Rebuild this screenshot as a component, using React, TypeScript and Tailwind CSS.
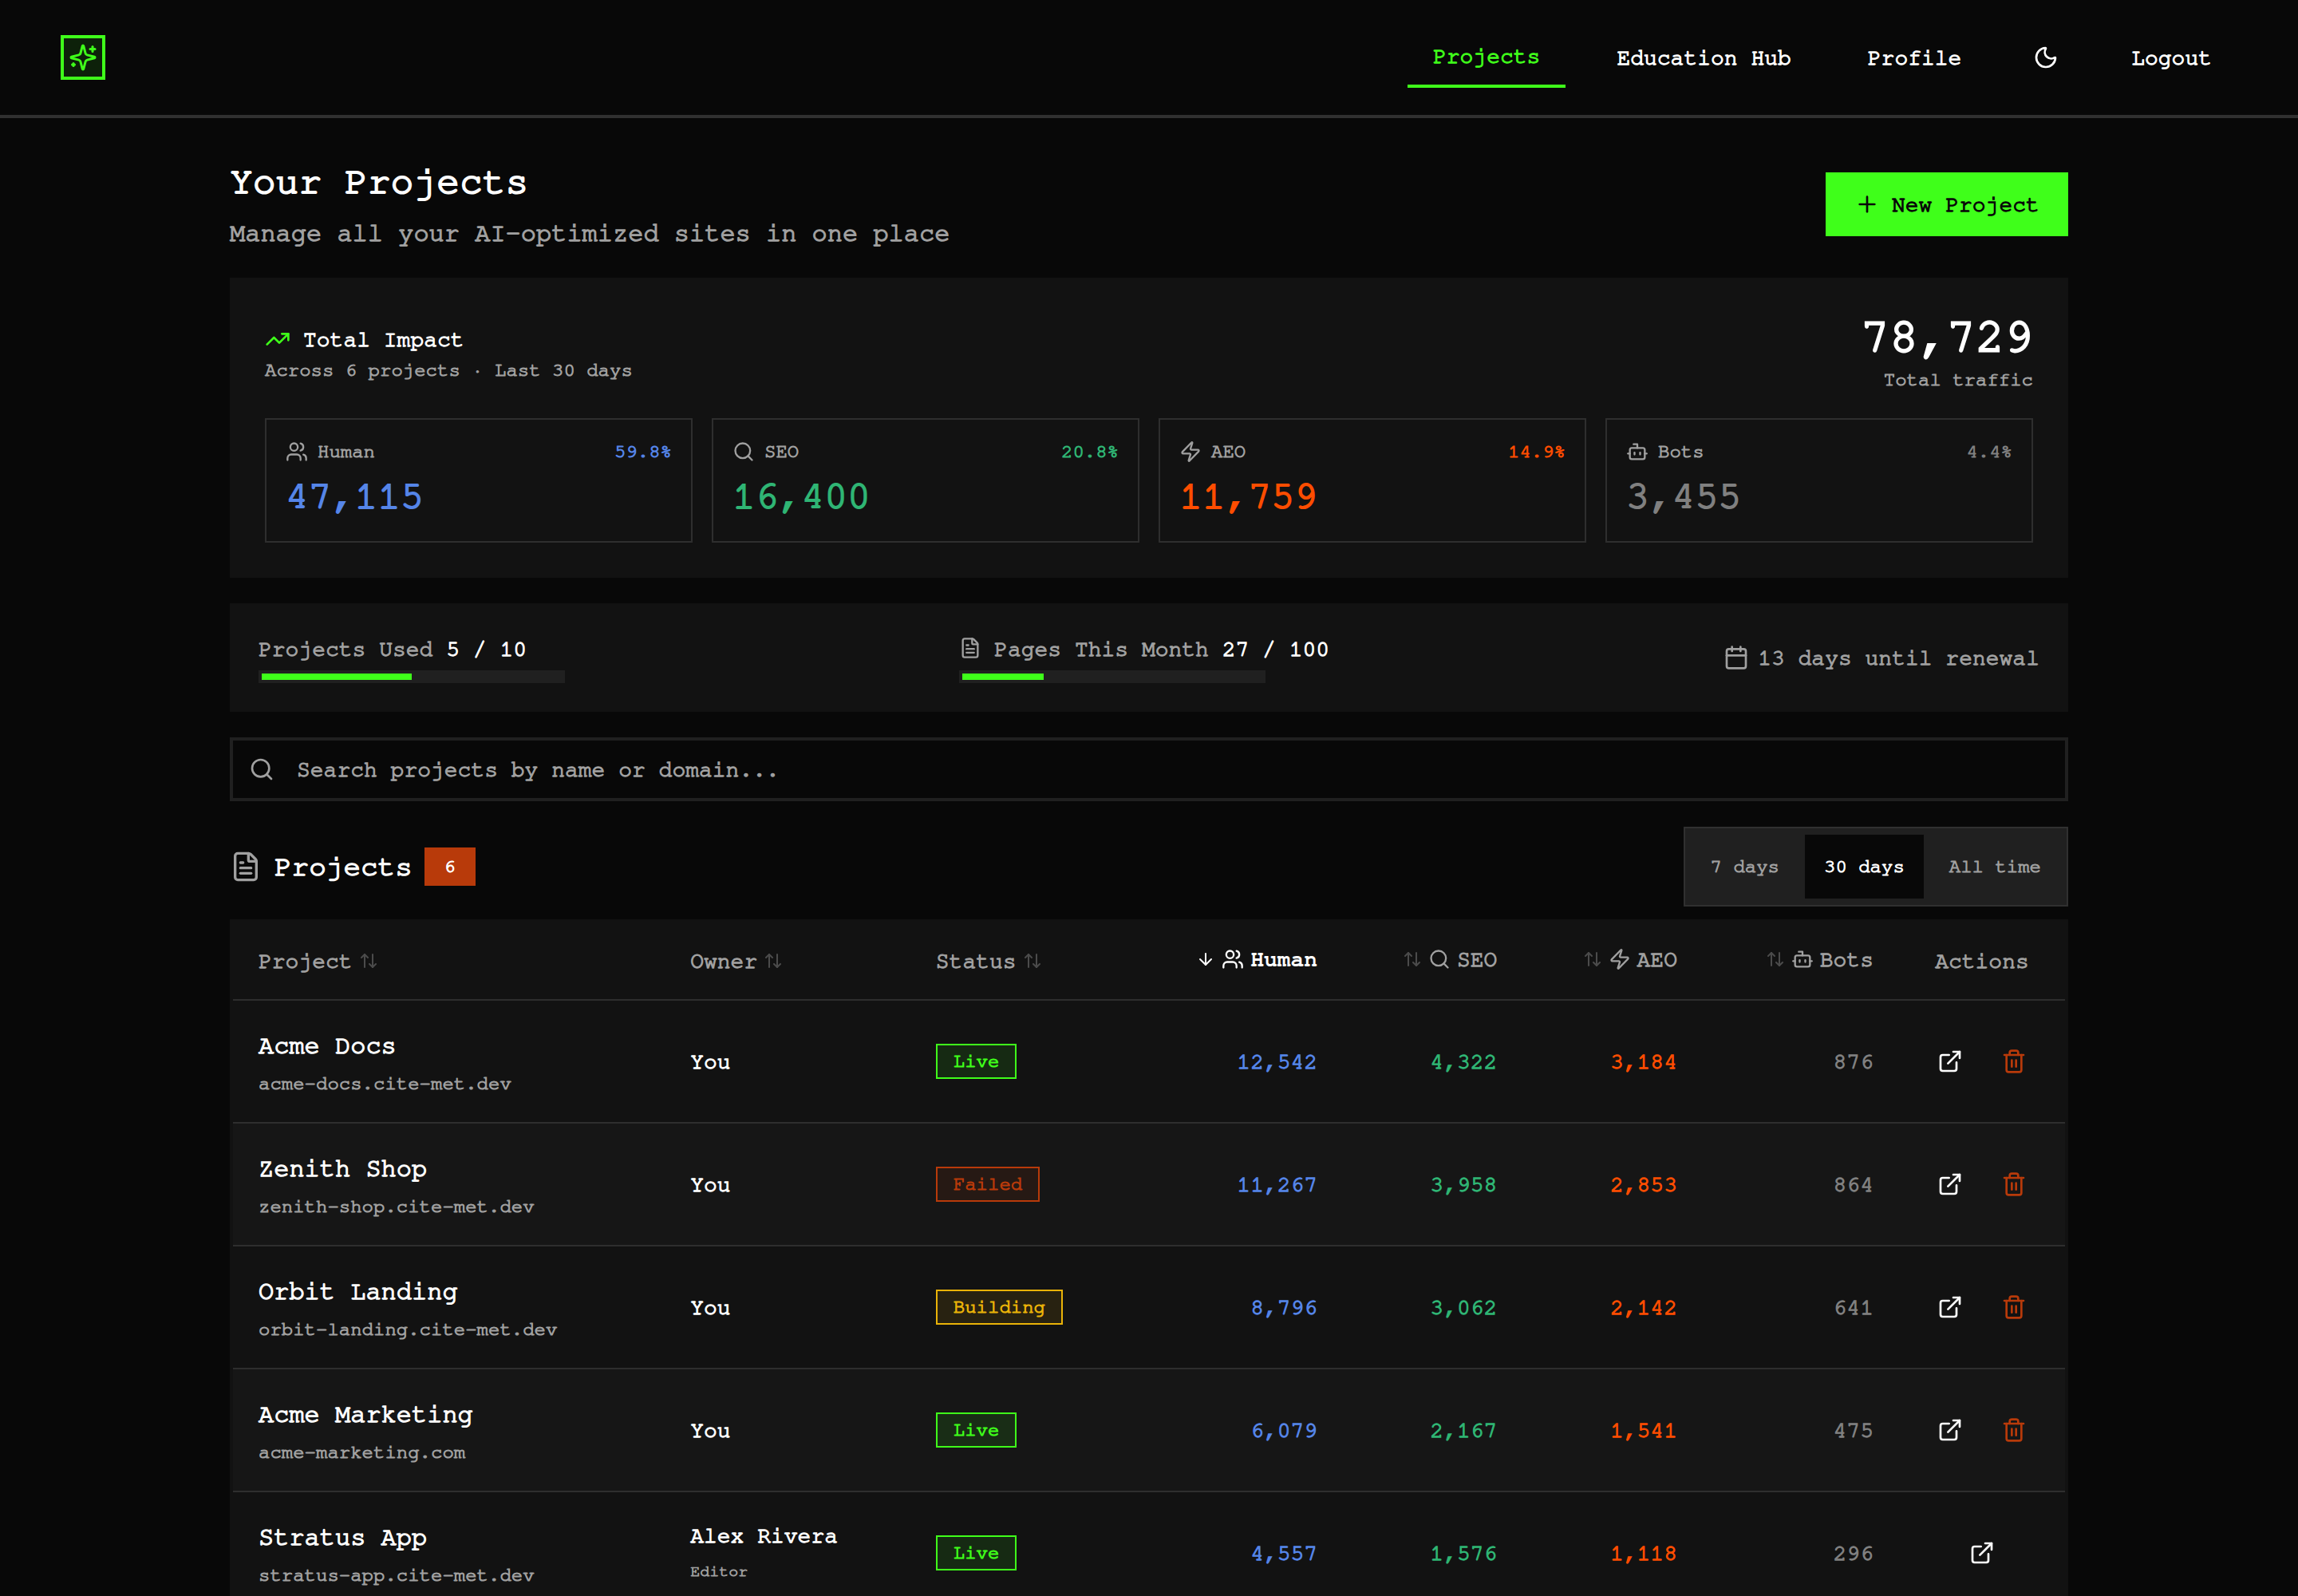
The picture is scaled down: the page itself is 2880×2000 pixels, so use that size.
import clsx from "clsx";
import {
  ArrowDown,
  ArrowUpDown,
  Bot,
  Calendar,
  ExternalLink,
  FileText,
  Moon,
  Plus,
  Search,
  Trash2,
  TrendingUp,
  Users,
  Zap,
} from "lucide-react";

type Status = "Live" | "Failed" | "Building";

interface Project {
  name: string;
  domain: string;
  owner: string;
  role?: string;
  status: Status;
  human: number;
  seo: number;
  aeo: number;
  bots: number;
}

const PROJECTS: Project[] = [
  { name: "Acme Docs", domain: "acme-docs.cite-met.dev", owner: "You", status: "Live", human: 12542, seo: 4322, aeo: 3184, bots: 876 },
  { name: "Zenith Shop", domain: "zenith-shop.cite-met.dev", owner: "You", status: "Failed", human: 11267, seo: 3958, aeo: 2853, bots: 864 },
  { name: "Orbit Landing", domain: "orbit-landing.cite-met.dev", owner: "You", status: "Building", human: 8796, seo: 3062, aeo: 2142, bots: 641 },
  { name: "Acme Marketing", domain: "acme-marketing.com", owner: "You", status: "Live", human: 6079, seo: 2167, aeo: 1541, bots: 475 },
  { name: "Stratus App", domain: "stratus-app.cite-met.dev", owner: "Alex Rivera", role: "Editor", status: "Live", human: 4557, seo: 1576, aeo: 1118, bots: 296 },
];

const STATS = [
  { label: "Human", icon: Users, value: 47115, share: "59.8%", color: "text-[#5585e8]" },
  { label: "SEO", icon: Search, value: 16400, share: "20.8%", color: "text-[#2fb574]" },
  { label: "AEO", icon: Zap, value: 11759, share: "14.9%", color: "text-[#ff4d00]" },
  { label: "Bots", icon: Bot, value: 3455, share: "4.4%", color: "text-[#808080]" },
];

const STATUS_STYLES: Record<Status, string> = {
  Live: "border-[#3fff1a] bg-[#3fff1a]/10 text-[#3fff1a]",
  Failed: "border-[#b83a0a] bg-[#b83a0a]/10 text-[#b83a0a]",
  Building: "border-[#eab308] bg-[#eab308]/10 text-[#eab308]",
};

const TABLE_COLS =
  "grid grid-cols-[541.2px_307.6px_284.6px_257.8px_225.2px_225.6px_246px_208px] items-center";

const fmt = (n: number) => n.toLocaleString("en-US");

function Logo() {
  return (
    <div className="flex size-14 items-center justify-center border-4 border-[#3fff1a] bg-[#3fff1a]/10 text-[#3fff1a]">
      <svg
        className="size-9 shrink-0"
        viewBox="0 0 24 24"
        fill="none"
        stroke="currentColor"
        strokeWidth="2"
        strokeLinecap="round"
        strokeLinejoin="round"
      >
        <path d="M9.937 15.5A2 2 0 0 0 8.5 14.063l-6.135-1.582a.5.5 0 0 1 0-.962L8.5 9.936A2 2 0 0 0 9.937 8.5l1.582-6.135a.5.5 0 0 1 .963 0L14.063 8.5A2 2 0 0 0 15.5 9.937l6.135 1.581a.5.5 0 0 1 0 .964L15.5 14.063a2 2 0 0 0-1.437 1.437l-1.582 6.135a.5.5 0 0 1-.963 0z" />
        <path d="M20 3v4" />
        <path d="M22 5h-4" />
        <path d="M4 17v2" />
        <path d="M5 18H3" />
      </svg>
    </div>
  );
}

function Navbar() {
  return (
    <header className="flex h-[148px] items-center justify-between border-b-4 border-[#303030] px-[76px]">
      <Logo />
      <nav className="flex items-center gap-8 text-[28px] leading-10">
        <a className="border-b-4 border-[#3fff1a] px-8 pt-[17px] pb-[15px] text-[#3fff1a]">Projects</a>
        <a className="px-8 pt-[17px] pb-[15px]">Education Hub</a>
        <a className="px-8 pt-[17px] pb-[15px]">Profile</a>
        <button className="flex w-[84.8px] justify-center pr-px">
          <Moon className="size-8" />
        </button>
        <a className="px-8 pt-[17px] pb-[15px]">Logout</a>
      </nav>
    </header>
  );
}

function TotalImpact() {
  return (
    <section className="mt-8 border-4 border-[#121212] bg-[#121212] p-10">
      <div className="mb-8 flex items-center justify-between">
        <div>
          <div className="flex items-center gap-4 text-[28px] leading-10">
            <TrendingUp className="size-8 text-[#3fff1a]" />
            <h2 className="pt-0.5">Total Impact</h2>
          </div>
          <p className="mt-0.5 text-2xl leading-8 text-[#a0a0a0]">Across 6 projects · Last 30 days</p>
        </div>
        <div className="text-right">
          <div className="text-6xl leading-[60px]">78,729</div>
          <p className="mt-2 text-2xl leading-8 text-[#a0a0a0]">Total traffic</p>
        </div>
      </div>
      <div className="grid grid-cols-4 gap-6">
        {STATS.map(({ label, icon: Icon, value, share, color }) => (
          <div key={label} className="border-2 border-[#2e2e2e] p-6">
            <div className="flex items-center justify-between text-2xl leading-8">
              <span className="flex items-center gap-3 text-[#a0a0a0]">
                <Icon className="size-7" />
                {label}
              </span>
              <span className={color}>{share}</span>
            </div>
            <div className={clsx("mt-2 pt-px text-5xl leading-[63px]", color)}>{fmt(value)}</div>
          </div>
        ))}
      </div>
    </section>
  );
}

function Meter({ percent }: { percent: number }) {
  return (
    <div className="mt-1.5 h-4 w-96 border-4 border-[#202020] bg-[#202020]">
      <div className="h-full bg-[#3fff1a]" style={{ width: `${percent}%` }} />
    </div>
  );
}

function UsageBar() {
  return (
    <section className="mt-8 flex items-center justify-between border-4 border-[#121212] bg-[#121212] p-8 text-[28px] leading-10 text-[#a0a0a0]">
      <div>
        <div className="pt-0.5">
          Projects Used <span className="text-white">5 / 10</span>
        </div>
        <Meter percent={50} />
      </div>
      <div>
        <div className="flex items-start gap-4">
          <FileText className="mt-1.5 size-7" />
          <div className="pt-0.5">
            Pages This Month <span className="text-white">27 / 100</span>
          </div>
        </div>
        <Meter percent={27} />
      </div>
      <div className="flex items-center gap-[11px]">
        <Calendar className="size-8" />
        <span className="pt-0.5">13 days until renewal</span>
      </div>
    </section>
  );
}

function SortHeader({ label }: { label: string }) {
  return (
    <div className="flex items-center gap-2 px-8">
      <span className="pt-0.5">{label}</span>
      <ArrowUpDown className="size-6 opacity-40" />
    </div>
  );
}

function MetricHeader({ label, icon: Icon, active }: { label: string; icon: typeof Users; active?: boolean }) {
  return (
    <div className={clsx("mb-1 flex items-center justify-end gap-2 px-8", active && "text-white")}>
      {active ? <ArrowDown className="size-6" /> : <ArrowUpDown className="size-6 opacity-40" />}
      <Icon className="size-7" />
      <span className={clsx("pt-0.5", active && "font-bold [-webkit-text-stroke:0]!")}>{label}</span>
    </div>
  );
}

function ProjectRow({ project, striped }: { project: Project; striped: boolean }) {
  return (
    <div className={clsx(TABLE_COLS, "h-[154px] border-b-2 border-[#2e2e2e] text-[28px] leading-10", striped && "bg-[#161616]")}>
      <div className="px-8">
        <div className="text-[32px] leading-[48px]">{project.name}</div>
        <div className="mt-2 text-2xl leading-8 text-[#a0a0a0]">{project.domain}</div>
      </div>
      <div className="px-8 pt-0.5">
        <div>{project.owner}</div>
        {project.role && <div className="mt-1 text-xl leading-10 text-[#a0a0a0]">{project.role}</div>}
      </div>
      <div className="flex px-8">
        <span className={clsx("border-2 px-5 py-1 text-2xl leading-8", STATUS_STYLES[project.status])}>
          {project.status}
        </span>
      </div>
      <div className="px-8 pt-0.5 text-right text-[#5585e8]">{fmt(project.human)}</div>
      <div className="px-8 pt-0.5 text-right text-[#2fb574]">{fmt(project.seo)}</div>
      <div className="px-8 pt-0.5 text-right text-[#ff4d00]">{fmt(project.aeo)}</div>
      <div className="px-8 pt-0.5 text-right text-[#808080]">{fmt(project.bots)}</div>
      <div className="flex justify-center gap-4 px-8">
        <button className="flex size-16 items-center justify-center">
          <ExternalLink className="size-8" />
        </button>
        {!project.role && (
          <button className="flex size-16 items-center justify-center text-[#b83a0a]">
            <Trash2 className="size-8" />
          </button>
        )}
      </div>
    </div>
  );
}

function ProjectsTable() {
  return (
    <section className="mt-4 border-4 border-[#121212] bg-[#121212]">
      <div className={clsx(TABLE_COLS, "h-[98px] border-b-2 border-[#2e2e2e] text-[28px] leading-10 text-[#a0a0a0]")}>
        <SortHeader label="Project" />
        <SortHeader label="Owner" />
        <SortHeader label="Status" />
        <MetricHeader label="Human" icon={Users} active />
        <MetricHeader label="SEO" icon={Search} />
        <MetricHeader label="AEO" icon={Zap} />
        <MetricHeader label="Bots" icon={Bot} />
        <div className="pt-0.5 text-center">Actions</div>
      </div>
      {PROJECTS.map((project, i) => (
        <ProjectRow key={project.name} project={project} striped={i % 2 === 1} />
      ))}
    </section>
  );
}

export default function App() {
  return (
    // FreeMono is very thin, the text stroke brings it up to a normal weight
    <div className="h-[2000px] overflow-hidden bg-[#080808] font-['FreeMono','Courier_Prime','Liberation_Mono',monospace] text-white **:[-webkit-text-stroke:0.046em]">
      <Navbar />
      <main className="mx-auto w-[2304px] pt-12">
        <div className="flex items-center justify-between">
          <div>
            <h1 className="text-5xl leading-[64px]">Your Projects</h1>
            <p className="mt-2 text-[32px] leading-[48px] text-[#a0a0a0]">Manage all your AI-optimized sites in one place</p>
          </div>
          <button className="flex h-20 w-[304px] items-center gap-[15px] bg-[#3fff1a] pl-9 text-[28px] leading-10 text-[#080808]">
            <Plus className="size-8" />
            <span className="pt-0.5">New Project</span>
          </button>
        </div>

        <TotalImpact />
        <UsageBar />

        <div className="mt-8 flex h-20 items-center gap-7 border-4 border-[#202020] px-5 text-[28px] leading-10 text-[#a0a0a0]">
          <Search className="size-8" />
          <span className="pt-0.5">Search projects by name or domain...</span>
        </div>

        <div className="mt-8 flex items-center justify-between">
          <div className="flex items-center gap-4">
            <FileText className="size-10 text-[#a0a0a0]" />
            <h2 className="text-4xl leading-[56px]">Projects</h2>
            <span className="-ml-px w-16 bg-[#b83a0a] py-2 text-center text-2xl leading-8">6</span>
          </div>
          <div className="flex gap-2 border-2 border-[#303030] bg-[#202020] p-2 text-2xl leading-8 text-[#a0a0a0]">
            <button className="h-20 px-6">7 days</button>
            <button className="h-20 bg-[#080808] px-6 text-white">30 days</button>
            <button className="h-20 px-6">All time</button>
          </div>
        </div>

        <ProjectsTable />
      </main>
    </div>
  );
}
